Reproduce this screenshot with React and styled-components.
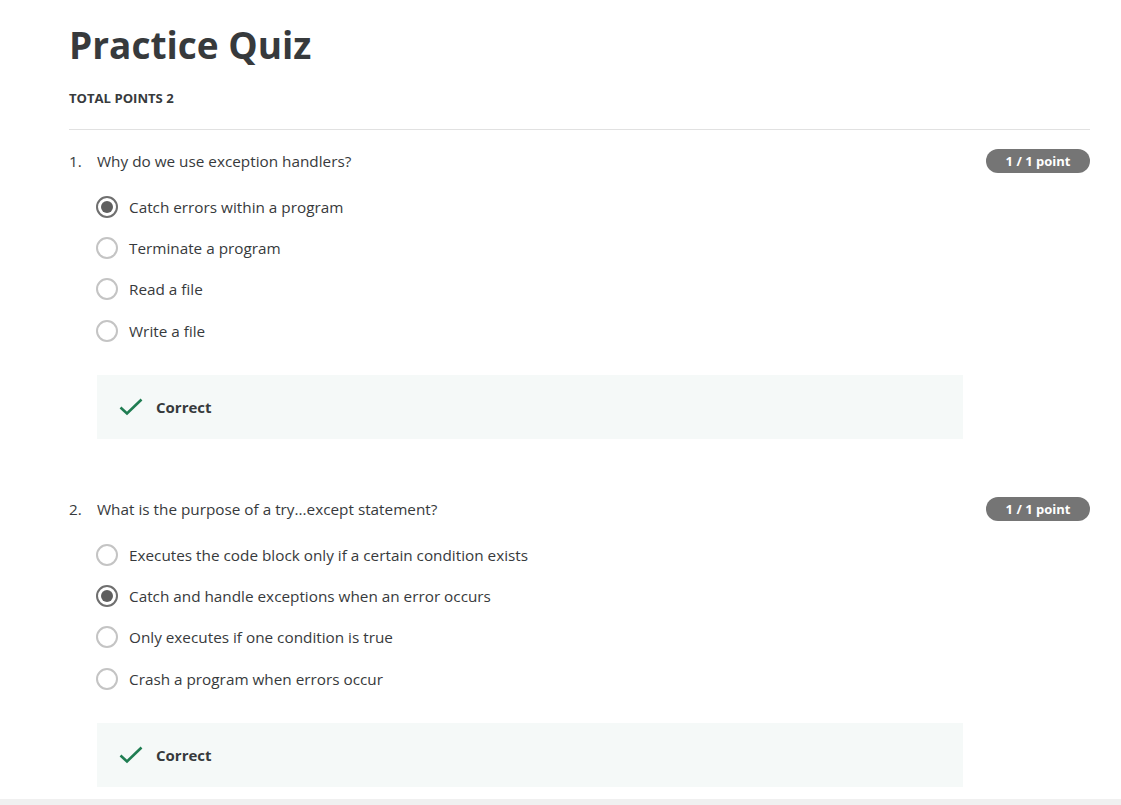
import styled, { createGlobalStyle } from "styled-components";

const GlobalStyle = createGlobalStyle`
  body {
    margin: 0;
    font-family: "Open Sans", "Liberation Sans", sans-serif;
    color: #373a3c;
    background: #fff;
  }
`;

const Page = styled.div`
  height: 805px;
  display: flex;
  flex-direction: column;
  overflow: hidden;
`;

const Content = styled.main`
  flex: 1;
  padding: 23px 31px 0 69px;
`;

const Title = styled.h1`
  margin: 0;
  font-size: 37px;
  line-height: 44px;
  font-weight: 700;
  color: #373a3c;
`;

const TotalPoints = styled.div`
  margin-top: 23px;
  font-size: 13.1px;
  font-weight: 700;
  line-height: 16px;
  text-transform: uppercase;
  color: #373a3c;
`;

const Divider = styled.hr`
  margin: 23px 0 0;
  border: 0;
  border-top: 1px solid #e1e1e1;
`;

const Question = styled.section`
  margin-top: ${(p) => p.top}px;
`;

const QuestionHead = styled.div`
  display: flex;
  align-items: center;
  justify-content: space-between;
  height: 24px;
`;

const Prompt = styled.div`
  display: flex;
  font-size: 15.3px;
  color: #373a3c;
  span:first-child {
    width: 28px;
  }
`;

const Badge = styled.span`
  width: 104px;
  height: 24px;
  border-radius: 12px;
  background: #757575;
  color: #fff;
  font-size: 13px;
  font-weight: 700;
  display: flex;
  align-items: center;
  justify-content: center;
`;

const Options = styled.ul`
  list-style: none;
  margin: 23px 0 0 27px;
  padding: 0;
  display: flex;
  flex-direction: column;
  gap: 19px;
`;

const Option = styled.li`
  display: flex;
  align-items: center;
  height: 22px;
  font-size: 15.3px;
  color: #373a3c;
  &:last-child {
    margin-top: 1px;
  }
`;

const Radio = styled.span`
  box-sizing: border-box;
  width: 22px;
  height: 22px;
  border-radius: 50%;
  border: 2px solid ${(p) => (p.checked ? "#6f6f6f" : "#c4c4c4")};
  margin-right: 11px;
  display: flex;
  align-items: center;
  justify-content: center;
  &::after {
    content: "";
    display: ${(p) => (p.checked ? "block" : "none")};
    width: 12px;
    height: 12px;
    border-radius: 50%;
    background: #5f5f5f;
  }
`;

const Feedback = styled.div`
  margin: 33px 0 0 28px;
  width: 866px;
  height: 64px;
  background: #f5f9f8;
  display: flex;
  align-items: center;
  padding-left: 22px;
  box-sizing: border-box;
  gap: 13px;
  font-size: 15px;
  font-weight: 700;
  color: #373a3c;
`;

const BottomBar = styled.div`
  height: 6px;
  background: #f0f0f0;
`;

const Check = () => (
  <svg width="24" height="18" viewBox="0 0 24 18" fill="none">
    <path d="M1.5 9.5 L8 15.5 L22.5 1.5" stroke="#1f7d52" strokeWidth="2.6" />
  </svg>
);

const questions = [
  {
    text: "Why do we use exception handlers?",
    options: [
      "Catch errors within a program",
      "Terminate a program",
      "Read a file",
      "Write a file",
    ],
    selected: 0,
    top: 19,
  },
  {
    text: "What is the purpose of a try...except statement?",
    options: [
      "Executes the code block only if a certain condition exists",
      "Catch and handle exceptions when an error occurs",
      "Only executes if one condition is true",
      "Crash a program when errors occur",
    ],
    selected: 1,
    top: 58,
  },
];

export default function App() {
  return (
    <Page>
      <GlobalStyle />
      <Content>
        <Title>Practice Quiz</Title>
        <TotalPoints>Total points 2</TotalPoints>
        <Divider />
        {questions.map((q, i) => (
          <Question key={i} top={q.top}>
            <QuestionHead>
              <Prompt>
                <span>{i + 1}.</span>
                <span>{q.text}</span>
              </Prompt>
              <Badge>1 / 1 point</Badge>
            </QuestionHead>
            <Options>
              {q.options.map((o, j) => (
                <Option key={j}>
                  <Radio checked={j === q.selected} />
                  {o}
                </Option>
              ))}
            </Options>
            <Feedback>
              <Check />
              Correct
            </Feedback>
          </Question>
        ))}
      </Content>
      <BottomBar />
    </Page>
  );
}
